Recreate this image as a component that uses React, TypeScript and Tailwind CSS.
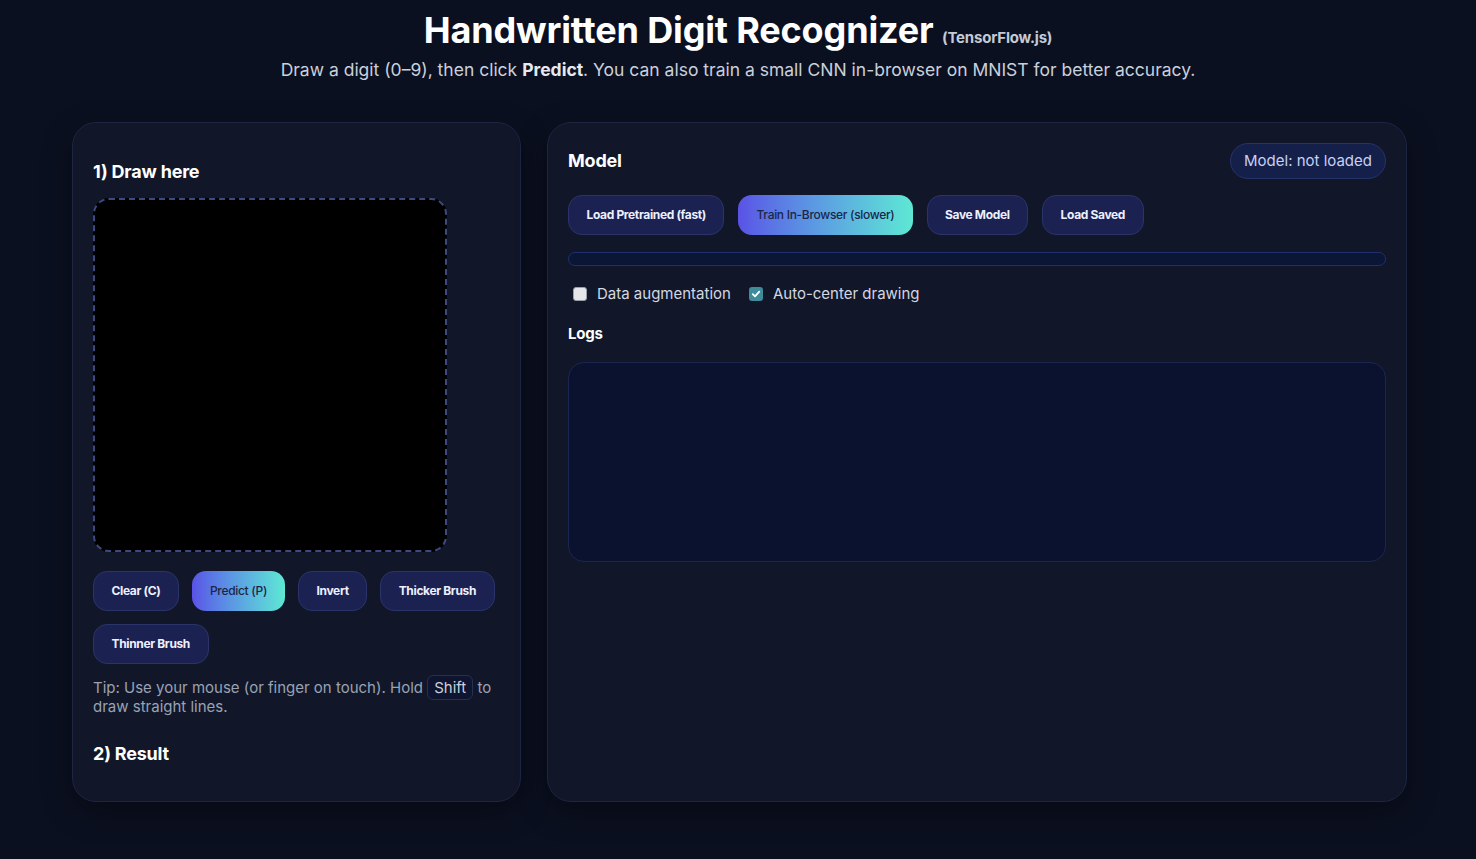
export default function App() {
  const btn =
    "h-[40px] rounded-[14px] border border-[#2a3468] bg-[#1b2252] px-[17.5px] text-[12px] font-bold tracking-[-0.35px] text-[#eef0ff]";
  const btnGrad =
    "h-[40px] rounded-[14px] bg-gradient-to-r from-[#5a52e6] to-[#5ee8d3] px-[18px] text-[12px] font-medium tracking-[-0.3px] text-[#1c2547]";

  return (
    <div
      className="min-h-[859px] bg-[#0b1020] text-white"
      style={{ fontFamily: "Inter, 'Noto Sans', sans-serif" }}
    >
      {/* Header */}
      <header className="pt-[10px] text-center">
        <h1 className="h-[40px] text-[36px] font-bold leading-[40px] tracking-[-0.15px] text-white">
          Handwritten Digit Recognizer{" "}
          <span className="align-baseline text-[15px] font-bold leading-none tracking-[-0.2px] text-[#c4cad6]">(TensorFlow.js)</span>
        </h1>
        <p className="mt-[6px] h-[28px] text-[17.5px] leading-[28px] text-[#c9d0dc]">
          Draw a digit (0–9), then click <b className="font-bold text-[#e6e9f0]">Predict</b>. You can also train a
          small CNN in-browser on MNIST for better accuracy.
        </p>
      </header>

      <main className="ml-[72px] mt-[38px] grid w-[1335px] grid-cols-[449px_1fr] gap-[26px]">
        {/* Left card */}
        <section className="rounded-[24px] border border-[#1c2542] bg-[#111729] px-[20px] pb-[33px] pt-[35px] shadow-[0_10px_30px_rgba(0,0,0,0.35)]">
          <h2 className="text-[18px] font-bold leading-[28px] tracking-[-0.2px]">1) Draw here</h2>
          <div className="mt-[12px] h-[354px] w-[354px] rounded-[16px] border-2 border-dashed border-[#3d4a80] bg-black" />
          <div className="mt-[19px] flex flex-wrap gap-x-[13px] gap-y-[13px]">
            <button className={btn}>Clear (C)</button>
            <button className={btnGrad}>Predict (P)</button>
            <button className={btn}>Invert</button>
            <button className={btn}>Thicker Brush</button>
            <button className={btn}>Thinner Brush</button>
          </div>
          <p className="mt-[14px] text-[15px] leading-[19px] text-[#9aa2b4]">
            Tip: Use your mouse (or finger on touch). Hold{" "}
            <kbd className="rounded-[6px] border border-[#27304f] bg-[#0f1530] px-[6px] py-[2px] text-[15px] font-[inherit] text-[#c9d0dc]">
              Shift
            </kbd>{" "}
            to draw straight lines.
          </p>
          <h2 className="mt-[24px] text-[18px] font-bold leading-[28px] tracking-[-0.2px]">2) Result</h2>
        </section>

        {/* Right card */}
        <section className="rounded-[24px] border border-[#1c2542] bg-[#111729] p-[20px] shadow-[0_10px_30px_rgba(0,0,0,0.35)]">
          <div className="flex h-[36px] items-center justify-between">
            <h2 className="text-[18px] font-bold leading-[28px] tracking-[-0.2px]">Model</h2>
            <span className="flex h-[36px] items-center rounded-full border border-[#26336b] bg-[#15204a] px-[13px] text-[15px] text-[#c7d0f5]">
              Model: not loaded
            </span>
          </div>
          <div className="mt-[16px] flex gap-[14px]">
            <button className={btn}>Load Pretrained (fast)</button>
            <button className={btnGrad}>Train In-Browser (slower)</button>
            <button className={btn}>Save Model</button>
            <button className={btn}>Load Saved</button>
          </div>
          <div className="mt-[17px] h-[14px] rounded-full border border-[#1f3070] bg-[#0b1535]" />
          <div className="mt-[17px] flex items-center gap-[18px] text-[15px] leading-[22px] text-[#d3d8e2]">
            <label className="flex items-center gap-[10px] pl-[5px]">
              <span className="h-[14px] w-[14px] rounded-[3px] border border-[#9aa0aa] bg-[#e4e6ea]" />
              Data augmentation
            </label>
            <label className="flex items-center gap-[10px]">
              <span className="flex h-[14px] w-[14px] items-center justify-center rounded-[3px] bg-[#3e8b9c]">
                <svg width="10" height="10" viewBox="0 0 10 10" fill="none">
                  <path d="M1.8 5.2 L4 7.4 L8.3 2.6" stroke="white" strokeWidth="1.8" strokeLinecap="round" strokeLinejoin="round" />
                </svg>
              </span>
              Auto-center drawing
            </label>
          </div>
          <h3 className="mt-[18px] text-[15px] font-bold leading-[22px] tracking-[-0.2px]">Logs</h3>
          <div className="mt-[17px] h-[200px] rounded-[16px] border border-[#1b2650] bg-[#0b1230]" />
        </section>
      </main>
    </div>
  );
}
